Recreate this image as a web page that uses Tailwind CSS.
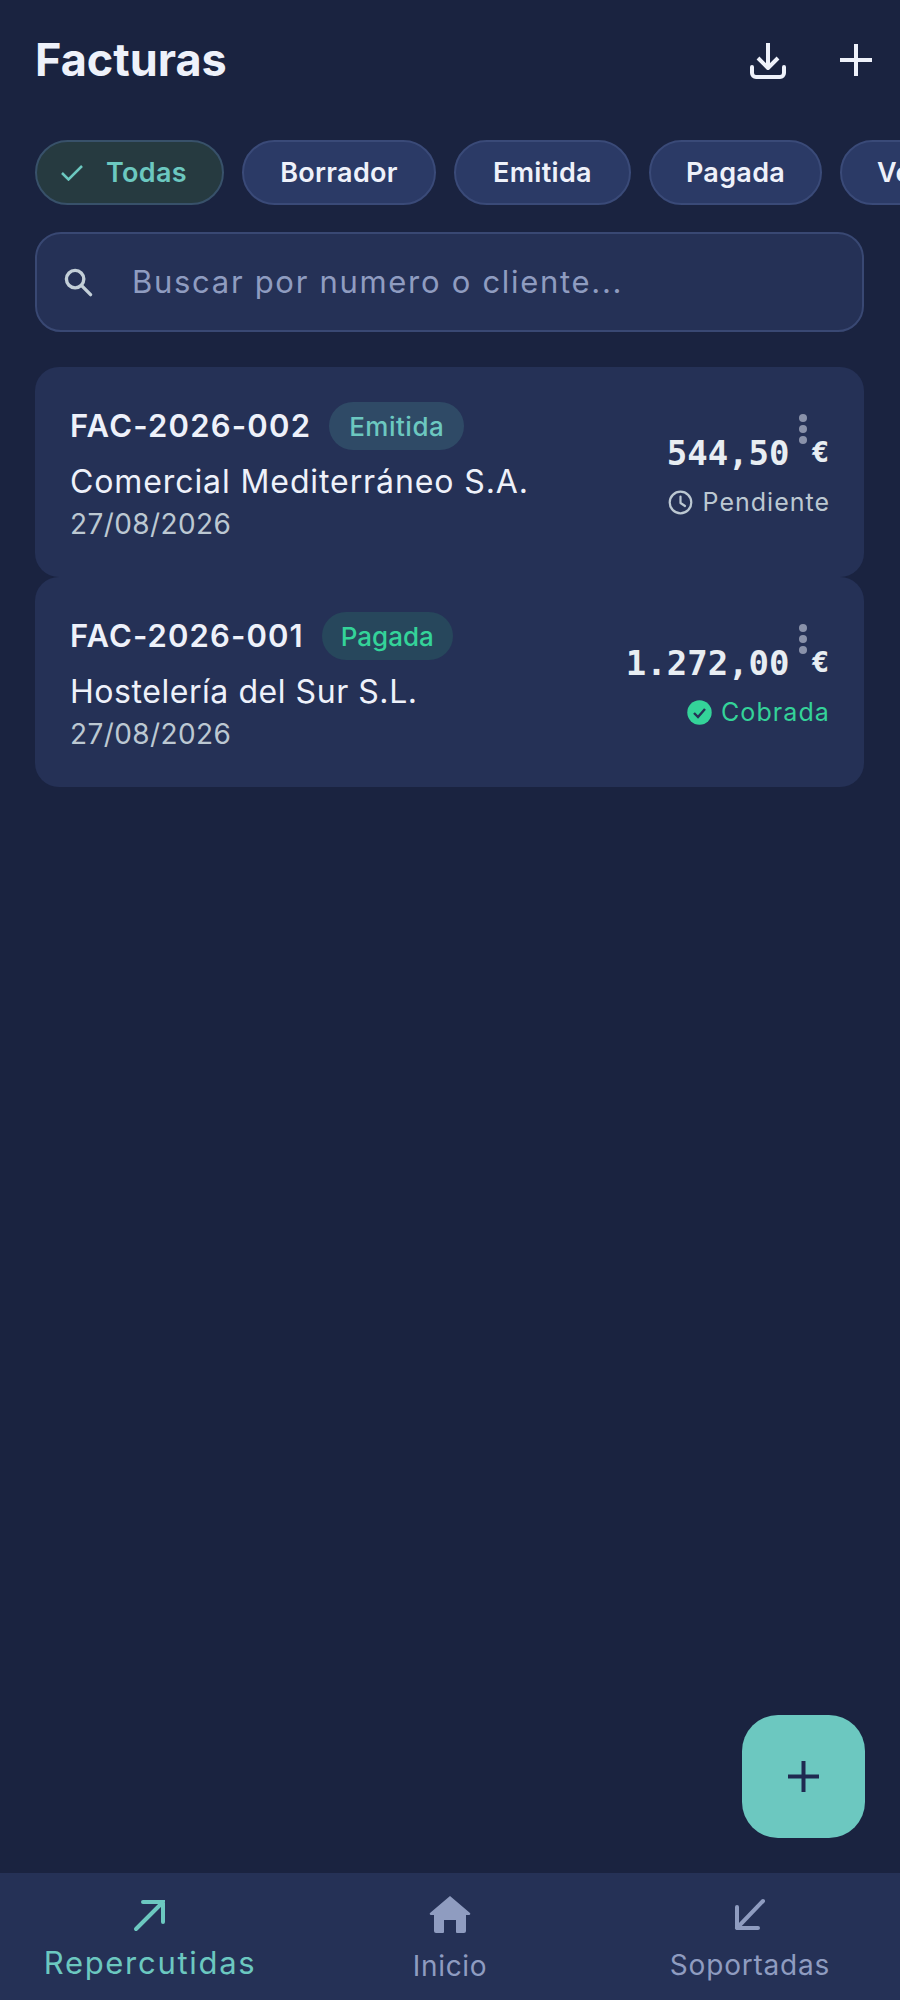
<!DOCTYPE html>
<html lang="es">
  <head>
    <meta charset="UTF-8" />
    <title>Facturas</title>
    <script src="https://cdn.jsdelivr.net/npm/@tailwindcss/browser@4"></script>
  </head>
  <body class="bg-[#1a2340]">
    <div class="relative w-[900px] h-[2000px] flex flex-col overflow-hidden bg-[#1a2340] text-[#eef1fa] font-['Inter',sans-serif]">
      <!-- Header -->
      <header class="h-[120px] shrink-0 flex items-center justify-between pl-[35px] pr-[28px]">
        <h1 class="text-[45px] font-bold text-[#eef1fa]">Facturas</h1>
        <div class="flex items-center gap-[54px]">
          <svg class="w-[36px] h-[37px]" viewBox="0 0 36 37" fill="none" stroke="#eef1fa" stroke-width="4" stroke-linejoin="round">
            <path d="M18 1v24M8 16l10 10 10-10" />
            <path d="M2 25v6a4 4 0 0 0 4 4h24a4 4 0 0 0 4-4v-6" stroke-linecap="round" />
          </svg>
          <svg class="w-[32px] h-[32px]" viewBox="0 0 32 32" fill="none" stroke="#eef1fa" stroke-width="4">
            <path d="M16 0v32M0 16h32" />
          </svg>
        </div>
      </header>

      <!-- Filters -->
      <div class="mt-[20px] h-[65px] shrink-0 flex gap-[18px] pl-[35px] overflow-hidden text-[27px] font-semibold tracking-[0.3px]">
        <div class="w-[189px] shrink-0 flex items-center rounded-full bg-[#263a40] border-2 border-[#38516a] pl-[24px] pt-[1px] text-[#6cc8c0]">
          <svg class="w-[22px] h-[16px] mr-[23px]" viewBox="0 0 22 16" fill="none" stroke="#6cc8c0" stroke-width="2.5">
            <path d="M1 8l6.5 6.5L21 1" />
          </svg>
          Todas
        </div>
        <div class="w-[194px] shrink-0 flex items-center justify-center rounded-full bg-[#2b3a66] border-2 border-[#3a4a78] pt-[1px]">Borrador</div>
        <div class="w-[177px] shrink-0 flex items-center justify-center rounded-full bg-[#2b3a66] border-2 border-[#3a4a78] pt-[1px]">Emitida</div>
        <div class="w-[173px] shrink-0 flex items-center justify-center rounded-full bg-[#2b3a66] border-2 border-[#3a4a78] pt-[1px]">Pagada</div>
        <div class="w-[120px] shrink-0 flex items-center rounded-full bg-[#2b3a66] border-2 border-[#3a4a78] pl-[35px] pt-[1px]">Vencida</div>
      </div>

      <!-- Search -->
      <div class="ml-[35px] mr-[36px] mt-[27px] h-[100px] shrink-0 flex items-center rounded-[26px] bg-[#253156] border-2 border-[#394873] pl-[27px]">
        <svg class="w-[29px] h-[29px] mr-[39px]" viewBox="0 0 30 30" fill="none" stroke="#c3cfd8" stroke-width="3.5" stroke-linecap="round">
          <circle cx="11.5" cy="11.5" r="9" />
          <path d="M18.5 18.5l9 9" />
        </svg>
        <span class="text-[31px] text-[#8f9cc0] tracking-[1.7px]">Buscar por numero o cliente...</span>
      </div>

      <!-- Invoices -->
      <div class="ml-[35px] mr-[36px] mt-[35px] flex flex-col">
        <div class="relative h-[210px] rounded-[24px] bg-[#253156] pl-[35px] pr-[35px] flex justify-between">
          <div class="pt-[35px]">
            <div class="h-[48px] flex items-center gap-[18px]">
              <span class="text-[31px] font-semibold tracking-[1.2px]">FAC-2026-002</span>
              <span class="h-[48px] flex items-center rounded-full bg-[#2f4a66] px-[20px] text-[26px] font-medium tracking-[0.5px] text-[#6cc8c0]">Emitida</span>
            </div>
            <div class="mt-[12px] text-[32px] tracking-[0.9px] leading-[40px]">Comercial Mediterráneo S.A.</div>
            <div class="mt-[2px] text-[28px] leading-[40px] tracking-[0.4px] text-[#bcc8d2]">27/08/2026</div>
          </div>
          <div class="pt-[65px] flex flex-col items-end">
            <div class="-mr-[2px] font-['DejaVu_Sans_Mono',monospace] font-bold text-[34px] leading-[40px] text-[#e8edf2]">544,50 <span class="inline-block w-[21px] text-center text-[29px] align-[3px]">€</span></div>
            <div class="mt-[13px] -mr-[1px] flex items-center gap-[10px] text-[25px] leading-[32px] tracking-[1px] text-[#bcc8d2]">
              <svg class="w-[25px] h-[25px]" viewBox="0 0 25 25" fill="none" stroke="#bcc8d2" stroke-width="2.2" stroke-linecap="round" stroke-linejoin="round">
                <circle cx="12.5" cy="12.5" r="10.8" />
                <path d="M12.5 6.5v6.5l4.5 3" />
              </svg>
              Pendiente
            </div>
          </div>
          <div class="absolute left-[764px] top-[47px] flex flex-col gap-[3px]">
            <span class="w-[8px] h-[8px] rounded-full bg-[#8a92aa]"></span>
            <span class="w-[8px] h-[8px] rounded-full bg-[#8a92aa]"></span>
            <span class="w-[8px] h-[8px] rounded-full bg-[#8a92aa]"></span>
          </div>
        </div>

        <div class="relative h-[210px] rounded-[24px] bg-[#253156] pl-[35px] pr-[35px] flex justify-between">
          <div class="pt-[35px]">
            <div class="h-[48px] flex items-center gap-[18px]">
              <span class="text-[31px] font-semibold tracking-[1.1px]">FAC-2026-001</span>
              <span class="h-[48px] flex items-center rounded-full bg-[#27475c] px-[19px] text-[26px] font-medium text-[#34d399]">Pagada</span>
            </div>
            <div class="mt-[12px] text-[32px] tracking-[0.55px] leading-[40px]">Hostelería del Sur S.L.</div>
            <div class="mt-[2px] text-[28px] leading-[40px] tracking-[0.4px] text-[#bcc8d2]">27/08/2026</div>
          </div>
          <div class="pt-[65px] flex flex-col items-end">
            <div class="-mr-[2px] font-['DejaVu_Sans_Mono',monospace] font-bold text-[34px] leading-[40px] text-[#e8edf2]">1.272,00 <span class="inline-block w-[21px] text-center text-[29px] align-[3px]">€</span></div>
            <div class="mt-[13px] -mr-[1px] flex items-center gap-[9px] text-[25px] leading-[32px] tracking-[1.1px] text-[#34d399]">
              <svg class="w-[25px] h-[25px]" viewBox="0 0 25 25">
                <circle cx="12.5" cy="12.5" r="12.2" fill="#34d399" />
                <path d="M7 13l4 4 7-8" fill="none" stroke="#253156" stroke-width="2.4" />
              </svg>
              Cobrada
            </div>
          </div>
          <div class="absolute left-[764px] top-[47px] flex flex-col gap-[3px]">
            <span class="w-[8px] h-[8px] rounded-full bg-[#8a92aa]"></span>
            <span class="w-[8px] h-[8px] rounded-full bg-[#8a92aa]"></span>
            <span class="w-[8px] h-[8px] rounded-full bg-[#8a92aa]"></span>
          </div>
        </div>
      </div>

      <!-- FAB -->
      <button class="absolute left-[742px] top-[1715px] w-[123px] h-[123px] rounded-[36px] bg-[#6cc8c0] flex items-center justify-center">
        <svg class="w-[31px] h-[31px]" viewBox="0 0 31 31" fill="none" stroke="#1f2a50" stroke-width="4">
          <path d="M15.5 0v31M0 15.5h31" />
        </svg>
      </button>

      <!-- Bottom nav -->
      <nav class="mt-auto h-[127px] shrink-0 grid grid-cols-3 bg-[#253156] text-[28px] text-[#8f9cc0]">
        <div class="flex flex-col items-center pt-[25px] text-[#6cc8c0]">
          <svg class="w-[34px] h-[34px]" viewBox="0 0 34 34" fill="none" stroke="#6cc8c0" stroke-width="4" stroke-linecap="round" stroke-linejoin="miter">
            <path d="M3 31L30 4M10 4h20v20" />
          </svg>
          <span class="mt-[11px] text-[31px] leading-[40px] tracking-[1.7px]">Repercutidas</span>
        </div>
        <div class="flex flex-col items-center pt-[23px]">
          <svg class="w-[42px] h-[37px]" viewBox="0 0 42 37" fill="#8f9cc0">
            <path d="M21 0L41 17a1.2 1.2 0 0 1-1 2h-3v16a2 2 0 0 1-2 2h-7a1 1 0 0 1-1-1V24H15v12a1 1 0 0 1-1 1H7a2 2 0 0 1-2-2V19H2a1.2 1.2 0 0 1-1-2z" />
          </svg>
          <span class="mt-[14px] leading-[38px] tracking-[0.7px]">Inicio</span>
        </div>
        <div class="flex flex-col items-center pt-[25px]">
          <svg class="w-[34px] h-[34px]" viewBox="0 0 34 34" fill="none" stroke="#8f9cc0" stroke-width="4" stroke-linecap="round" stroke-linejoin="round">
            <path d="M30 3L4 30M4 9v21h21" />
          </svg>
          <span class="mt-[14px] leading-[38px] tracking-[0.8px]">Soportadas</span>
        </div>
      </nav>
    </div>
  </body>
</html>
